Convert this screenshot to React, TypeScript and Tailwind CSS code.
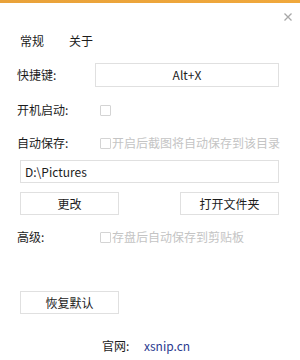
import React from "react";

const Check = () => (
  <span className="inline-block w-[11px] h-[11px] border border-[#d4d4d4] bg-white rounded-[1px] shrink-0" />
);

export default function App() {
  return (
    <div
      className="w-[300px] h-[360px] bg-white text-[12px] text-[#1c1c1c] flex flex-col"
      style={{ fontFamily: '"Noto Sans CJK SC", "Microsoft YaHei", sans-serif' }}
    >
      <div className="h-[3px] bg-gradient-to-r from-[#e9a23a] to-[#f0a83c]" />
      <div className="h-[27px] flex justify-end items-center pr-[8px]">
        <svg width="8" height="8" viewBox="0 0 8 8">
          <path d="M0.5 0.5L7.5 7.5M7.5 0.5L0.5 7.5" stroke="#a8a8a8" strokeWidth="1.3" />
        </svg>
      </div>
      <div className="flex h-[22px] items-center pl-[20px] gap-[25px] leading-none">
        <span>常规</span>
        <span>关于</span>
      </div>

      <div className="mt-[11px] flex items-center h-[24px]">
        <span className="w-[95px] pl-[17px] leading-none">快捷键:</span>
        <div className="w-[184px] h-[24px] border border-[#e0e0e0] flex items-center justify-center leading-none">
          Alt+X
        </div>
      </div>

      <div className="mt-[12px] flex items-center h-[22px]">
        <span className="w-[100px] pl-[17px] leading-none">开机启动:</span>
        <Check />
      </div>

      <div className="mt-[11px] flex items-center h-[22px]">
        <span className="w-[100px] pl-[17px] leading-none">自动保存:</span>
        <Check />
        <span className="ml-[1px] text-[#c4c4c4] leading-none">开启后截图将自动保存到该目录</span>
      </div>

      <div className="mt-[6px] ml-[20px] w-[259px] h-[23px] border border-[#e0e0e0] flex items-center pl-[4px] leading-none">
        D:\Pictures
      </div>

      <div className="mt-[9px] ml-[20px] w-[259px] flex justify-between h-[23px]">
        <div className="w-[99px] h-[23px] border border-[#e0e0e0] flex items-center justify-center leading-none">
          更改
        </div>
        <div className="w-[99px] h-[23px] border border-[#e0e0e0] flex items-center justify-center leading-none">
          打开文件夹
        </div>
      </div>

      <div className="mt-[11px] flex items-center h-[22px]">
        <span className="w-[100px] pl-[17px] leading-none">高级:</span>
        <Check />
        <span className="ml-[1px] text-[#c4c4c4] leading-none">存盘后自动保存到剪贴板</span>
      </div>

      <div className="mt-[43px] ml-[20px] w-[99px] h-[23px] border border-[#e0e0e0] flex items-center justify-center leading-none">
        恢复默认
      </div>

      <div className="mt-[21px] flex items-center h-[22px] pl-[102px] leading-none">
        <span className="w-[42px]">官网:</span>
        <span className="text-[#2b3a8f]">xsnip.cn</span>
      </div>
    </div>
  );
}
